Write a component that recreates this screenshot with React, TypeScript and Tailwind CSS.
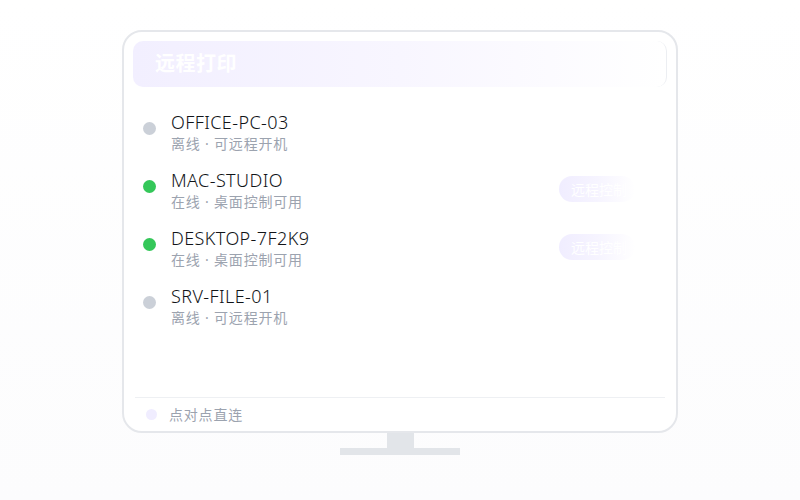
import React from 'react';

const devices = [
  { name: 'OFFICE-PC-03', online: false, note: '离线 · 可远程开机' },
  { name: 'MAC-STUDIO', online: true, note: '在线 · 桌面控制可用' },
  { name: 'DESKTOP-7F2K9', online: true, note: '在线 · 桌面控制可用' },
  { name: 'SRV-FILE-01', online: false, note: '离线 · 可远程开机' },
];

const font = { fontFamily: '"Noto Sans", "Noto Sans CJK SC", sans-serif' };

const App = () => {
  return (
    <div className="w-[800px] h-[500px] bg-gradient-to-b from-white to-[#fcfcfd] flex flex-col items-center pt-[30px]" style={font}>
      <div className="w-[556px] h-[403px] border-2 border-[#e5e7eb] rounded-[20px] bg-white flex flex-col pt-[9px] px-[9px]">
        <div className="h-[46px] rounded-[10px] bg-gradient-to-r from-[#f2efff] via-[#f8f6ff] to-white flex items-center pl-[22px] border-r border-[#eceef2]">
          <span className="text-white text-[20px] font-bold tracking-[0.5px]">远程打印</span>
        </div>

        <div className="flex-1 flex flex-col gap-[14px] pt-[24px] pl-[10px] pr-[32px]">
          {devices.map((d) => (
            <div key={d.name} className="flex items-start">
              <div className={`w-[13px] h-[13px] rounded-full mt-[11px] ${d.online ? 'bg-[#34c759]' : 'bg-[#cbd0d8]'}`} />
              <div className="ml-[15px] flex-1 flex flex-col">
                <span className="text-[18px] leading-[22px] font-light text-[#111418] tracking-[0.4px]">{d.name}</span>
                <span className="text-[14px] leading-[22px] text-[#9ca3af] tracking-[0.8px]">{d.note}</span>
              </div>
              {d.online && (
                <div className="mt-[7px] w-[76px] h-[26px] rounded-full bg-gradient-to-r from-[#f0edff] via-[#f6f4ff] to-white flex items-center pl-[12px] text-[14px] text-white">
                  远程控制
                </div>
              )}
            </div>
          ))}
        </div>

        <div className="h-[34px] mx-[2px] border-t border-[#eef0f3] flex items-center pl-[11px]">
          <div className="w-[11px] h-[11px] rounded-full bg-[#f0edff]" />
          <span className="ml-[12px] text-[14px] tracking-[0.8px] text-[#9ca3af]">点对点直连</span>
        </div>
      </div>
      <div className="w-[27px] h-[15px] bg-[#e2e5e9]" />
      <div className="w-[120px] h-[7px] bg-[#e2e5e9]" />
    </div>
  );
};

export default App;
